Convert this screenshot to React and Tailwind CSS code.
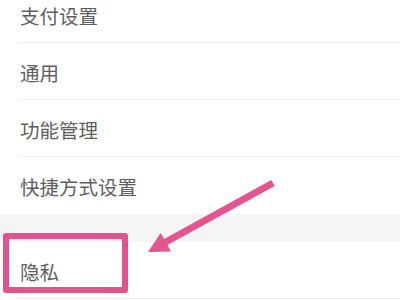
import React from 'react';

const rows = ['支付设置', '通用', '功能管理', '快捷方式设置'];

const Row = ({ label, last }) => (
    <div className={`h-[57px] ml-[17px] flex items-center pl-[3px] pt-[3px] ${last ? '' : 'border-b border-[#f1f1f1]'}`}>
        <span className="text-[19.5px] leading-none text-[#606060]">{label}</span>
    </div>
);

export default function App() {
    return (
        <div
            className="relative w-[400px] h-[300px] overflow-hidden bg-white"
            style={{ fontFamily: '"Noto Sans CJK SC", "Noto Sans", sans-serif' }}
        >
            <div className="-mt-[14px]">
                {rows.map((r, i) => (
                    <Row key={r} label={r} last={i === rows.length - 1} />
                ))}
                {/* section gap */}
                <div className="h-[28px] bg-[#f5f5f5]" />
                <Row label="隐私" />
            </div>

            {/* highlight box */}
            <div className="absolute left-[3px] top-[233px] w-[125px] h-[60px] border-[6px] border-[#e2528c] rounded-[3px]" />

            {/* arrow */}
            <svg className="absolute left-0 top-0" width="400" height="300" viewBox="0 0 400 300">
                <line x1="273" y1="183" x2="163" y2="243.5" stroke="#e4558f" strokeWidth="7" />
                <polygon points="148,252 160.7,233 171,251.5" fill="#e4558f" />
            </svg>
        </div>
    );
}
